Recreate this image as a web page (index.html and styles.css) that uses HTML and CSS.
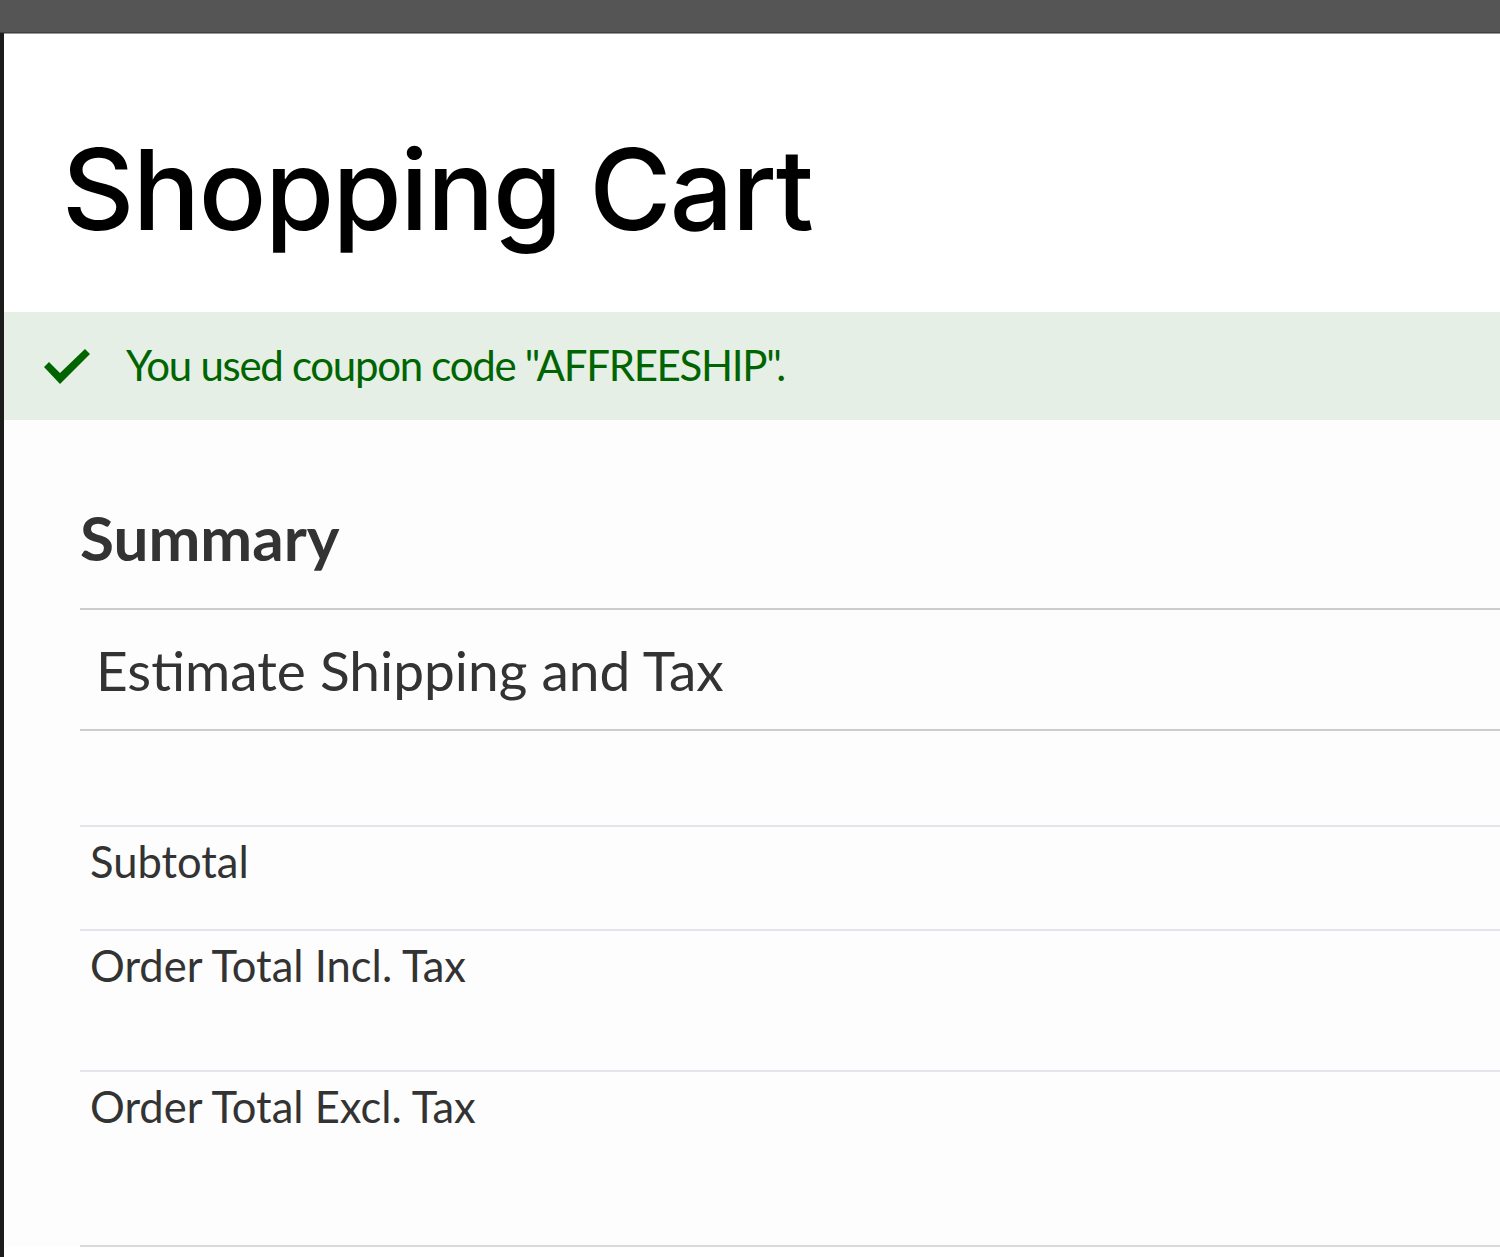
FILE: index.html
```html
<!DOCTYPE html>
<html lang="en">
<head>
<meta charset="utf-8">
<title>Shopping Cart</title>
<link rel="stylesheet" href="styles.css">
</head>
<body>
<div class="topbar"></div>
<main class="page">
  <h1 class="page-title">Shopping Cart</h1>
  <div class="message-success">
    <svg class="check" width="46" height="38" viewBox="0 0 46 38" aria-hidden="true">
      <path d="M0 19 L5 14 L16 25 L41 1 L46 6 L16 36 Z" fill="#006400"/>
    </svg>
    <span class="message-text">You used coupon code "AFFREESHIP".</span>
  </div>
  <section class="summary">
    <h2 class="summary-title">Summary</h2>
    <div class="estimate">Estimate Shipping and Tax</div>
    <div class="spacer"></div>
    <div class="totals">
      <div class="row row-subtotal">Subtotal</div>
      <div class="row row-incl">Order Total Incl. Tax</div>
      <div class="row row-excl">Order Total Excl. Tax</div>
    </div>
  </section>
</main>
</body>
</html>
```

FILE: styles.css
```css
html, body {
  margin: 0;
  padding: 0;
  background: #ffffff;
}

body {
  font-family: "Lato", "Open Sans", sans-serif;
  color: #333333;
  overflow: hidden;
}

.topbar {
  height: 32px;
  background: #555555;
  border-bottom: 1px solid #3f3f3f;
  box-shadow: 0 1px 0 #9a9a9a;
}

.page {
  border-left: 4px solid #1c1c1c;
  min-height: 1230px;
  box-sizing: border-box;
}

.page-title {
  margin: 0;
  padding: 100px 0 0 58px;
  height: 170px;
  box-sizing: border-box;
  font-family: "Inter", "Open Sans", sans-serif;
  font-weight: 500;
  font-size: 112px;
  line-height: 1;
  letter-spacing: -1.5px;
  color: #000000;
  white-space: nowrap;
}

.message-success {
  margin-top: 109px;
  height: 108px;
  background: #e5efe5;
  display: flex;
  align-items: center;
  padding-left: 40px;
  gap: 36px;
}

.check {
  flex: none;
  margin-top: 2px;
}

.message-text {
  font-family: "Lato", sans-serif;
  font-size: 42px;
  color: #006400;
  letter-spacing: -1.3px;
  white-space: nowrap;
  margin-top: -3px;
}

.summary {
  padding-left: 76px;
  background: #fdfdfd;
}

.summary-title {
  margin: 0;
  padding-top: 86px;
  height: 190px;
  box-sizing: border-box;
  font-size: 62px;
  font-weight: 700;
  line-height: 1;
  color: #333333;
  border-bottom: 2px solid #cccccc;
}

.estimate {
  height: 121px;
  box-sizing: border-box;
  padding: 33px 0 0 16px;
  font-size: 55px;
  line-height: 1;
  color: #333333;
  border-bottom: 2px solid #cccccc;
}

.spacer {
  height: 94px;
  border-bottom: 2px solid #e4e4ea;
}

.row {
  box-sizing: border-box;
  padding: 13px 0 0 10px;
  font-size: 43.5px;
  line-height: 1;
  color: #333333;
  border-bottom: 2px solid #e4e4ea;
}

.row-subtotal { height: 104px; }
.row-incl { height: 141px; }
.row-excl { height: 175px; border-bottom-color: #d9d9d9; }
```
